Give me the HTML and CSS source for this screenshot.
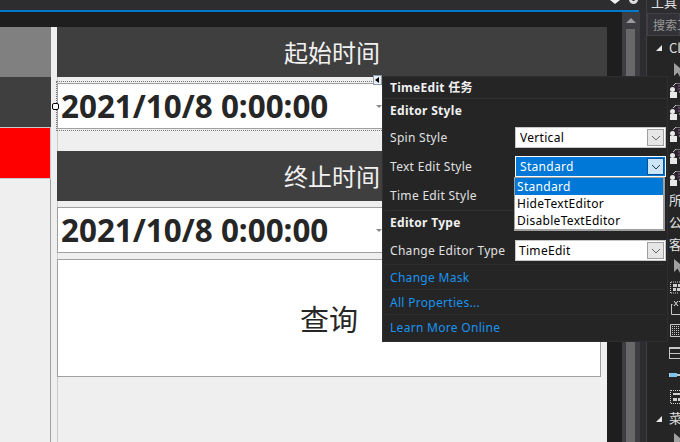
FILE: index.html
```html
<!DOCTYPE html>
<html lang="zh">
<head>
<meta charset="utf-8">
<title>TimeEdit</title>
<link rel="stylesheet" href="styles.css">
</head>
<body>
<div class="app">
  <div class="main">
    <div class="topbar"></div>
    <div class="accent"></div>
    <div class="doc">
      <div class="pane">
        <div class="band"></div>
        <div class="stage">
          <div class="side">
            <div class="side-row gray"></div>
            <div class="side-row dark"></div>
            <div class="side-row red"></div>
            <div class="side-rest"></div>
          </div>
          <div class="form">
            <div class="head">起始时间</div>
            <div class="date first"><span>2021/10/8 0:00:00</span><i class="caret"></i></div>
            <div class="head second">终止时间</div>
            <div class="date"><span>2021/10/8 0:00:00</span><i class="caret"></i></div>
            <div class="query">查询</div>
          </div>
        </div>
      </div>
      <div class="gutter"></div>
      <div class="scroll">
        <div class="arrow"></div>
        <div class="thumb"></div>
      </div>
    </div>
  </div>
  <div class="rail"></div>
  <div class="tools">
    <div class="tools-title">工具</div>
    <div class="search">搜索工</div>
    <div class="tree">
      <div class="t-row"><i class="tri"></i><span class="lbl">Cl</span></div>
      <div class="t-row"><svg class="ico ptr" viewBox="0 0 16 16"><path d="M1 1v13l3.500-3.500 2.500 4.500 2-1-2.500-4.500H11z" fill="#a0a0a0"/></svg></div>
      <div class="t-row"><svg class="ico" viewBox="0 0 16 16"><use href="#ctl"/></svg></div>
      <div class="t-row"><svg class="ico" viewBox="0 0 16 16"><use href="#ctl"/></svg></div>
      <div class="t-row"><svg class="ico" viewBox="0 0 16 16"><use href="#ctl"/></svg></div>
      <div class="t-row"><svg class="ico" viewBox="0 0 16 16"><use href="#ctl"/></svg></div>
      <div class="t-row"><svg class="ico" viewBox="0 0 16 16"><use href="#ctl"/></svg></div>
      <div class="t-row"><span class="lbl">所</span></div>
      <div class="t-row"><span class="lbl">公</span></div>
      <div class="t-row"><span class="lbl">客</span></div>
      <div class="t-row"><svg class="ico ptr" viewBox="0 0 16 16"><path d="M1 1v13l3.500-3.500 2.500 4.500 2-1-2.500-4.500H11z" fill="#a0a0a0"/></svg></div>
      <div class="t-row"><svg class="ico" viewBox="0 0 16 16"><path d="M1.500 2v11" fill="none" stroke="#d0d0d0" stroke-dasharray="1 1"/><path d="M2 2h10M2 13h8" fill="none" stroke="#d0d0d0" stroke-dasharray="1 1"/><path d="M4 4h4v3H4zM9 4h7v3H9zM4 8h3v3H4zM8 8h8v3H8z" fill="#d0d0d0"/></svg></div>
      <div class="t-row"><svg class="ico" viewBox="0 0 16 16"><path d="M2.500 3v10.500h13M2.500 3.500h1" fill="none" stroke="#c8c8c8"/><path d="M5 0l4 5M9 0L5 5M10 0l2.500 2.500L15 0M12.500 2.500V5" fill="none" stroke="#e0e0e0"/></svg></div>
      <div class="t-row"><svg class="ico" viewBox="0 0 16 16"><path d="M1.500 1.500h12v12h-12z" fill="none" stroke="#c8c8c8"/><path d="M3 3h1v1H3zM5 3h1v1H5zM7 3h1v1H7zM9 3h1v1H9zM11 3h1v1h-1zM3 5h1v1H3zM5 5h1v1H5zM7 5h1v1H7zM9 5h1v1H9zM11 5h1v1h-1zM3 7h1v1H3zM5 7h1v1H5zM7 7h1v1H7zM9 7h1v1H9zM11 7h1v1h-1zM3 9h1v1H3zM5 9h1v1H5zM7 9h1v1H7zM9 9h1v1H9zM11 9h1v1h-1zM3 11h1v1H3zM5 11h1v1H5zM7 11h1v1H7zM9 11h1v1H9zM11 11h1v1h-1z" fill="#c8c8c8"/></svg></div>
      <div class="t-row"><svg class="ico" viewBox="0 0 16 16"><path d="M0 2h16v12H0z" fill="#252526"/><path d="M0 2h16v2H0zM0 8h16v1H0zM0 13h16v1H0zM0 4h1v10H0z" fill="#c8c8c8"/></svg></div>
      <div class="t-row"><svg class="ico" viewBox="0 0 16 16"><path d="M0 6h8v4H0z" fill="#7cc4f0"/><path d="M0 6h1v4H0zM8 7h8v2H8z" fill="#c8c8c8"/></svg></div>
      <div class="t-row"><svg class="ico" viewBox="0 0 16 16"><path d="M1.500 1v14M2 1.500h9M2 14.500h9" fill="none" stroke="#d0d0d0" stroke-dasharray="1 1"/><path d="M4 4h12v2H4zM4 9h4v3H4zM9 9h7v3H9z" fill="#d0d0d0"/></svg></div>
      <div class="t-row"><i class="tri"></i><span class="lbl">菜</span></div>
      <div class="t-row"><svg class="ico ptr" viewBox="0 0 16 16"><path d="M1 1v13l3.500-3.500 2.500 4.500 2-1-2.500-4.500H11z" fill="#a0a0a0"/></svg></div>
    </div>
  </div>
</div>

<svg class="defs" width="0" height="0">
  <defs>
    <g id="ctl">
      <path d="M4 3l3-3h9v9H10" fill="#2d2430" stroke="#c8c8c8"/>
      <path d="M9 3h2M12 3h2M9 6h4" stroke="#7a6a80"/>
      <path d="M1 9h7v6H1z" fill="#e8e8e8"/>
      <circle cx="3.500" cy="6.500" r="2.500" fill="#e8e8e8"/>
    </g>
  </defs>
</svg>

<div class="selection"></div>
<div class="handle"></div>
<div class="tag"></div>

<div class="popup">
  <div class="p-title">TimeEdit 任务</div>
  <div class="p-body">
    <div class="p-sec">Editor Style</div>
    <div class="p-field"><span>Spin Style</span>
      <div class="combo"><b>Vertical</b><i class="drop"><svg viewBox="0 0 10 6"><path d="M1 1l4 4 4-4" fill="none" stroke="#666"/></svg></i></div>
    </div>
    <div class="p-field"><span>Text Edit Style</span>
      <div class="combo on"><b>Standard</b><i class="drop"><svg viewBox="0 0 10 6"><path d="M1 1l4 4 4-4" fill="none" stroke="#1a3a5a"/></svg></i></div>
    </div>
    <div class="p-field"><span>Time Edit Style</span></div>
    <div class="p-sec typed">Editor Type</div>
    <div class="p-field change"><span>Change Editor Type</span>
      <div class="combo tight"><b>TimeEdit</b><i class="drop"><svg viewBox="0 0 10 6"><path d="M1 1l4 4 4-4" fill="none" stroke="#666"/></svg></i></div>
    </div>
    <div class="p-link">Change Mask</div>
    <div class="p-link">All Properties...</div>
    <div class="p-link last">Learn More Online</div>
  </div>
  <ul class="list">
    <li class="sel">Standard</li>
    <li>HideTextEditor</li>
    <li>DisableTextEditor</li>
  </ul>
</div>
</body>
</html>
```
FILE: styles.css
```css
* { box-sizing: border-box; }
html, body { margin: 0; padding: 0; }
body {
  width: 680px;
  height: 442px;
  overflow: hidden;
  position: relative;
  background: #2d2d30;
  font-family: "Noto Sans", "Noto Sans CJK SC", sans-serif;
}
.defs { position: absolute; }
.app { display: flex; height: 442px; }
.main { width: 640px; flex: none; display: flex; flex-direction: column; }
.topbar { height: 10px; flex: none; background: #2d2d30; position: relative; overflow: hidden; }
.topbar::before {
  content: "";
  position: absolute;
  left: 610px;
  top: 0;
  border: 5px solid transparent;
  border-top: 4px solid #f1f1f1;
  border-bottom: 0;
}
.topbar::after {
  content: "";
  position: absolute;
  left: 629px;
  top: -5px;
  width: 3px;
  height: 3px;
  border: 3px solid #dcdcdc;
  border-radius: 50%;
}
.accent { height: 2px; flex: none; width: 639px; background: #007acc; }
.doc { flex: 1; min-height: 0; display: flex; background: #1e1e1e; }
.pane { width: 607px; flex: none; display: flex; flex-direction: column; }
.band { height: 15px; flex: none; }
.stage { flex: 1; min-height: 0; background: #efefef; display: flex; }
.side { width: 51px; display: flex; flex-direction: column; }
.side-row { height: 50px; flex: none; }
.gray { background: #808080; }
.dark { background: #3f3f3f; }
.red { background: #f00; border: solid #c8c8c8; border-width: 1px 1px 1px 0; height: 52px; }
.side-rest { flex: 1; border-right: 1px solid #a0a0a0; }
.form { width: 550px; margin-left: 6px; border-left: 1px solid #ccc; }
.head {
  height: 50px;
  margin-left: -1px;
  background: #3f3f3f;
  color: #f1f1f1;
  font: 24px/50px "Noto Sans CJK SC", sans-serif;
  text-align: center;
}
.second { margin-top: 22px; }
.date {
  height: 46px;
  margin: 6px 6px 0 -1px;
  background: #fff;
  border: 1px solid #a0a0a0;
  padding-left: 3px;
  display: flex;
  align-items: center;
  justify-content: space-between;
  color: #262626;
  font: 700 31.400px/44px "Noto Sans", sans-serif;
}
.caret {
  width: 0;
  height: 0;
  margin-right: 218px;
  border: 3px solid transparent;
  border-top: 3px solid #888;
  border-bottom: 0;
}
.query {
  height: 118px;
  margin: 6px 6px 0 -1px;
  background: #fff;
  border: 1px solid #a0a0a0;
  color: #262626;
  font: 29px/116px "Noto Sans CJK SC", sans-serif;
  text-align: center;
}
.gutter { width: 15px; flex: none; background: #1e1e1e; }
.scroll { width: 18px; flex: none; background: #3e3e42; padding: 6px 5px 0 4px; overflow: hidden; }
.arrow {
  width: 0;
  height: 0;
  margin: 0 0 6px 0;
  border: 5px solid transparent;
  border-bottom-color: #9a9a9a;
  border-top: 0;
}
.thumb { width: 9px; height: 413px; background: #686868; }
.rail { width: 7px; flex: none; background: #2d2d30; border-right: 1px solid #3f3f46; }
.tools { flex: 1; min-width: 0; background: #252526; color: #e0e0e0; overflow: hidden; font: 12px/16px "Noto Sans CJK SC", sans-serif; }
.tools-title { height: 13px; background: #2d2d30; font-size: 13px; line-height: 4px; padding-left: 4px; white-space: nowrap; }
.search {
  height: 23px;
  background: #333337;
  border: 1px solid #3f3f46;
  color: #999;
  line-height: 21px;
  padding-left: 5px;
  white-space: nowrap;
}
.tree { padding-top: 1px; }
.t-row { height: 21.800px; display: flex; align-items: center; padding-left: 22px; position: relative; white-space: nowrap; }
.tri {
  position: absolute;
  left: 9px;
  top: 8px;
  width: 0;
  height: 0;
  border-left: 6px solid transparent;
  border-bottom: 6px solid #e8e8e8;
}
.lbl { font-size: 13px; }
.ico { width: 16px; height: 16px; flex: none; }
.ptr { margin-left: 4px; }

.selection {
  position: absolute;
  left: 56px;
  top: 81px;
  width: 400px;
  height: 50px;
  border: 1px dotted #777;
}
.handle {
  position: absolute;
  left: 52px;
  top: 103px;
  width: 7px;
  height: 7px;
  background: #fff;
  border: 1px solid #000;
  border-radius: 2px;
}
.tag {
  position: absolute;
  left: 373px;
  top: 75px;
  width: 9px;
  height: 10px;
  background: #e8eef4;
  border: 1px solid #8a9aaa;
}
.tag::after {
  content: "";
  position: absolute;
  left: 1px;
  top: 1px;
  border: 3px solid transparent;
  border-right: 4px solid #000;
  border-left: 0;
}
.popup {
  position: absolute;
  left: 382px;
  top: 76px;
  width: 286px;
  height: 266px;
  background: #252526;
  border: 1px solid #2f2f33;
  color: #e0e0e0;
  font: 12px/16px "Noto Sans", "Noto Sans CJK SC", sans-serif;
  letter-spacing: .3px;
}
.p-title { height: 22px; line-height: 21px; padding-left: 7px; font-weight: 700; color: #f1f1f1; border-bottom: 1px solid #303034; }
.p-body { padding: 0 0 0 2px; }
.p-sec { height: 24px; line-height: 23px; padding-left: 5px; font-weight: 700; color: #f1f1f1; }
.p-sec.typed { height: 29px; margin-right: 2px; border-top: 1px solid #303034; line-height: 23px; }
.p-field { height: 29px; display: flex; justify-content: space-between; align-items: center; padding: 0 1px 0 5px; }
.p-field.change { height: 27px; margin-top: -2px; }
.combo {
  width: 151px;
  height: 21px;
  background: #fff;
  border: 1px solid #c8c8c8;
  color: #000;
  display: flex;
  align-items: center;
  justify-content: space-between;
  padding: 0 1px 0 4px;
}
.combo.tight { padding-left: 3px; }
.combo b { font-weight: 400; }
.drop {
  width: 17px;
  height: 17px;
  background: #e6e6e6;
  border: 1px solid #a0a0a0;
  display: flex;
  align-items: center;
  justify-content: center;
}
.drop svg { width: 10px; height: 6px; }
.combo.on { background: #0078d7; color: #fff; border: 1px solid #fff; }
.combo.on .drop { background: #cce4f7; border-color: #005499; }
.p-link { height: 25px; margin-right: 2px; line-height: 25px; padding-left: 5px; color: #1a94f0; border-top: 1px solid #2d2d30; }
.p-link.last { height: 26px; }
.list {
  position: absolute;
  left: 131px;
  top: 100px;
  width: 151px;
  height: 54px;
  margin: 0;
  padding: 0;
  list-style: none;
  background: #fff;
  border: 1px solid #a0a0a0;
  border-width: 1px 2px 2px 1px;
  color: #000;
}
.list li { height: 17px; line-height: 17px; padding-left: 2px; }
.list .sel { background: #0078d7; color: #fff; }
```
